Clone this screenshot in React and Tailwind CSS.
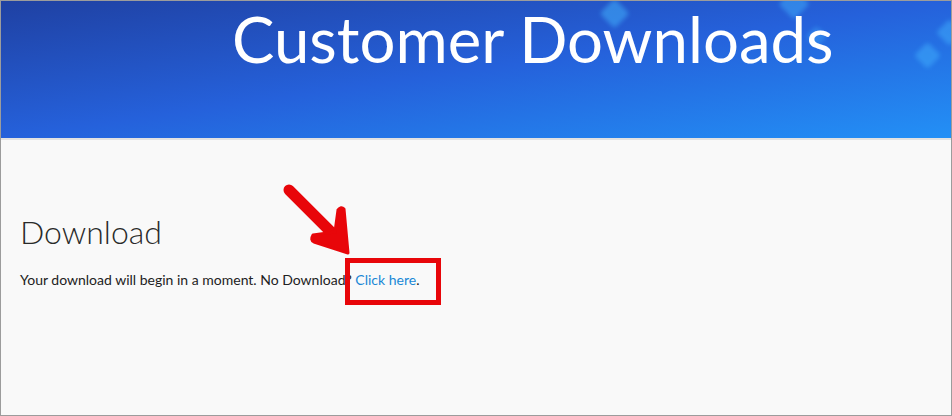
import React from "react";

const diamonds = [
  { x: 603, y: 2, s: 21, o: "opacity-50" },
  { x: 782, y: -8, s: 22, o: "opacity-45" },
  { x: 808, y: 28, s: 15, o: "opacity-35" },
  { x: 917, y: 45, s: 19, o: "opacity-45" },
  { x: 939, y: 22, s: 19, o: "opacity-45" },
];

function Header() {
  return (
    <header className="relative h-[137px] shrink-0 overflow-hidden bg-linear-to-br from-[#1f41a3] via-[#2561db] to-[#2390f6]">
      {/* floating diamonds */}
      {diamonds.map((d, i) => (
        <span
          key={i}
          className={`absolute rotate-45 rounded-[3px] bg-[#44b6ff] blur-[2px] ${d.o}`}
          style={{ left: d.x, top: d.y, width: d.s, height: d.s }}
        />
      ))}
      <h1 className="relative pl-[231px] pt-[3px] text-[63.5px] leading-[70px] font-normal text-white font-['Lato',sans-serif]">
        Customer Downloads
      </h1>
    </header>
  );
}

function Arrow() {
  return (
    <svg
      className="absolute left-[278px] top-[40px]"
      width="80"
      height="80"
      viewBox="0 0 80 80"
    >
      <line
        x1="10"
        y1="10"
        x2="62"
        y2="62"
        stroke="#e8060a"
        strokeWidth="11"
        strokeLinecap="round"
      />
      <path
        d="M69 73 L35 62 Q31 60 34 55 L56 52 L59 30 Q62 26 65 29 Z"
        fill="#e8060a"
        stroke="#e8060a"
        strokeWidth="3"
        strokeLinejoin="round"
      />
    </svg>
  );
}

export default function App() {
  return (
    <div className="w-[952px] h-[416px] flex flex-col overflow-hidden border border-[#9c9c9c] bg-[#f9f9f9] font-['Lato',sans-serif]">
      <Header />
      <div className="h-[2px] shrink-0 bg-[#e2e2e2]" />
      <main className="relative flex-1 px-[19px] pt-[72px]">
        <h2 className="text-[32px] leading-[40px] font-light text-[#2a2a2a]">
          Download
        </h2>
        <p className="mt-[18px] text-[14px] leading-[20px] text-[#222]">
          Your download will begin in a moment. No Download?{" "}
          <a href="#" className="text-[#1a88d6]">
            Click here
          </a>
          .
        </p>
        <Arrow />
        <div className="absolute left-[344px] top-[118px] w-[96px] h-[47px] border-[5px] border-[#e8060a]" />
      </main>
    </div>
  );
}
